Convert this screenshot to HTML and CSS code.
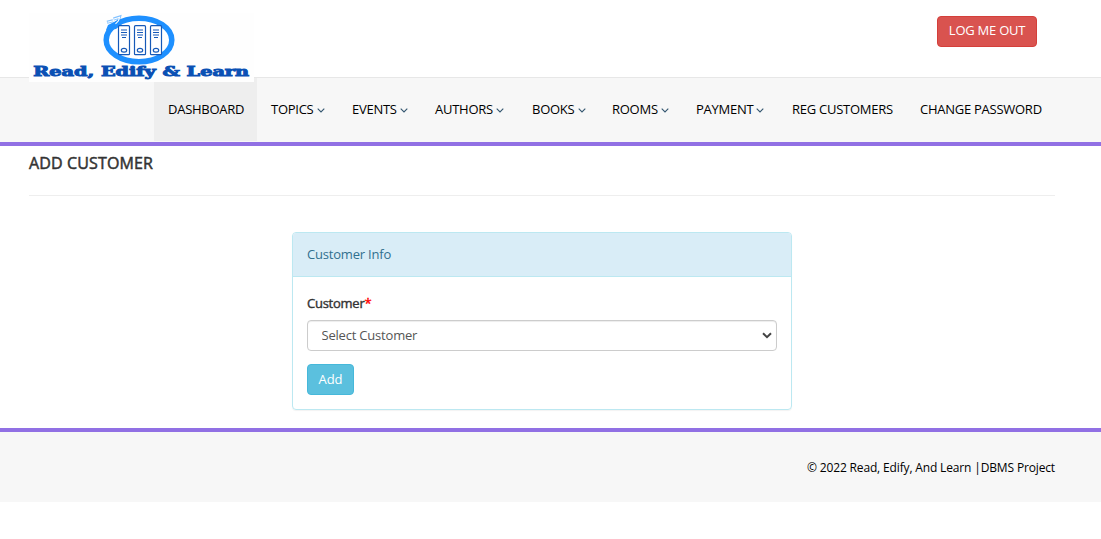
FILE: index.html
```html
<!DOCTYPE html>
<html lang="en">
<head>
<meta charset="utf-8">
<title>Add Customer</title>
<link rel="stylesheet" href="styles.css">
</head>
<body>
<header class="header">
  <svg class="logo" viewBox="0 0 225 69" role="img" aria-label="Read, Edify &amp; Learn">
    <rect width="225" height="69" fill="#fefefe"/>
    <ellipse cx="110" cy="27" rx="32.8" ry="21.7" fill="#fff" stroke="#1e90ff" stroke-width="5.500"/>
    <path d="M77 17l2-5 10-5 4 4-6 5z" fill="#1e90ff"/>
    <path d="M78 9.300l6-1.500M84.500 6l6-2-1 3.500-3 3" fill="none" stroke="#1e90ff" stroke-width="3" opacity=".55"/>
    <path d="M78.500 9.300l6-1.500M84.500 6.300l6-2-1 3.500-3 3" fill="none" stroke="#fff" stroke-width="1.100"/>
    <g fill="#fff" stroke="#1659b8" stroke-width="1.200">
      <rect x="89.500" y="12.700" width="11" height="29" rx="1"/>
      <rect x="105.500" y="12.700" width="11" height="29" rx="1"/>
      <rect x="121.500" y="12.700" width="11" height="29" rx="1"/>
      <ellipse cx="95" cy="37.200" rx="2.700" ry="1.900"/>
      <ellipse cx="111" cy="37.200" rx="2.700" ry="1.900"/>
      <ellipse cx="127" cy="37.200" rx="2.700" ry="1.900"/>
    </g>
    <path d="M92 17h6M92 19.500h6M92 22h6M93 24.500h4M108 17h6M108 19.500h6M108 22h6M109 24.500h4M124 17h6M124 19.500h6M124 22h6M125 24.500h4" stroke="#1659b8"/>
    <text class="logo-text" x="4.300" y="63.300" textLength="215.700" lengthAdjust="spacingAndGlyphs">Read, Edify &amp; Learn</text>
  </svg>
  <a class="btn btn-danger">LOG ME OUT</a>
</header>
<nav class="nav">
  <a class="nav-item active">DASHBOARD</a>
  <a class="nav-item topics">TOPICS <svg class="caret" viewBox="0 0 8 5"><path d="M.7.7L4 4 7.300.7"/></svg></a>
  <a class="nav-item events">EVENTS <svg class="caret" viewBox="0 0 8 5"><path d="M.7.7L4 4 7.300.7"/></svg></a>
  <a class="nav-item authors">AUTHORS <svg class="caret" viewBox="0 0 8 5"><path d="M.7.7L4 4 7.300.7"/></svg></a>
  <a class="nav-item books">BOOKS <svg class="caret" viewBox="0 0 8 5"><path d="M.7.7L4 4 7.300.7"/></svg></a>
  <a class="nav-item rooms">ROOMS <svg class="caret" viewBox="0 0 8 5"><path d="M.7.7L4 4 7.300.7"/></svg></a>
  <a class="nav-item payment">PAYMENT <svg class="caret" viewBox="0 0 8 5"><path d="M.7.7L4 4 7.300.7"/></svg></a>
  <a class="nav-item reg">REG CUSTOMERS</a>
  <a class="nav-item change">CHANGE PASSWORD</a>
</nav>
<main class="content">
  <h4 class="title">ADD CUSTOMER</h4>
  <section class="panel">
    <div class="panel-heading">Customer Info</div>
    <form class="panel-body">
      <label class="label" for="customer">Customer<span class="required">*</span></label>
      <div class="select-wrap">
        <select class="select" id="customer"><option>Select Customer</option></select>
        <svg class="select-arrow" viewBox="0 0 10 7"><path d="M1 1.200l4 4 4-4"/></svg>
      </div>
      <button class="btn btn-info" type="button">Add</button>
    </form>
  </section>
</main>
<footer class="footer">© 2022 Read, Edify, And Learn |DBMS Project</footer>
</body>
</html>
```
FILE: styles.css
```css
* { box-sizing: border-box; }
body {
  margin: 0;
  background: #fff;
  color: #333;
  font: 13px/20px "Open Sans", sans-serif;
}
.header {
  height: 77px;
  padding: 13px 64px 0 29px;
  display: flex;
  align-items: flex-start;
  justify-content: space-between;
}
.logo {
  position: relative;
  z-index: 1;
  width: 225px;
  height: 69px;
  flex: none;
}
.logo-text {
  font: 900 12.5px "DejaVu Serif", serif;
  fill: #0a50b4;
  stroke: #0a50b4;
  stroke-width: .9px;
}
.btn {
  display: block;
  height: 31px;
  padding: 0;
  border: 1px solid;
  border-radius: 4px;
  color: #fff;
  font: 13px/27px "Open Sans", sans-serif;
  text-align: center;
}
.btn-danger {
  width: 100px;
  margin-top: 3px;
  background: #d9534f;
  border-color: #d43f3a;
  letter-spacing: -.25px;
}
.btn-info {
  width: 47px;
  margin-top: 13px;
  background: #5bc0de;
  border-color: #46b8da;
}
.nav {
  height: 69px;
  display: flex;
  padding-left: 154px;
  background: #f7f7f7;
  border-top: 1px solid #e7e7e7;
  border-bottom: 4px solid #9170e4;
}
.nav-item {
  height: 63px;
  padding-left: 14px;
  color: #000;
  line-height: 63px;
  letter-spacing: -.26px;
  white-space: nowrap;
  flex: none;
}
.active { width: 103px; background: #eee; }
.topics { width: 81px; }
.events { width: 83px; }
.authors { width: 97px; }
.books { width: 80px; }
.rooms { width: 84px; }
.payment { width: 96px; }
.reg { width: 128px; }
.change { width: 150px; }
.caret {
  width: 8px;
  height: 5px;
  vertical-align: 1px;
  fill: none;
  stroke: #33566f;
  stroke-width: 1.1;
}
.content {
  height: 282px;
  padding: 0 46px 0 29px;
}
.title {
  height: 50px;
  margin: 0 0 36px;
  padding-top: 7px;
  border-bottom: 1px solid #eee;
  font-size: 16px;
  font-weight: 400;
  line-height: 20px;
  letter-spacing: .14px;
  -webkit-text-stroke: .5px currentColor;
}
.panel {
  width: 500px;
  height: 178px;
  margin-left: 263px;
  border: 1px solid #bce8f1;
  border-radius: 4px;
  box-shadow: 0 1px 1px rgba(0, 0, 0, .05);
}
.panel-heading {
  height: 44px;
  padding: 11px 14px;
  background: #d9edf7;
  border-bottom: 1px solid #bce8f1;
  border-radius: 3px 3px 0 0;
  color: #31708f;
  letter-spacing: -.2px;
}
.panel-body { padding: 16px 14px; }
.label {
  display: block;
  height: 27px;
  letter-spacing: -.25px;
  -webkit-text-stroke: .4px currentColor;
}
.required { color: red; }
.select-wrap { position: relative; }
.select {
  display: block;
  width: 100%;
  height: 31px;
  padding: 0 14px 2px 13.5px;
  appearance: none;
  background: #fff;
  border: 1px solid #ccc;
  border-radius: 4px;
  box-shadow: inset 0 1px 1px rgba(0, 0, 0, .075);
  color: #555;
  font: 13px/20px "Open Sans", sans-serif;
  letter-spacing: -.2px;
}
.select-arrow {
  position: absolute;
  right: 5px;
  top: 12px;
  width: 10px;
  height: 7px;
  fill: none;
  stroke: #444;
  stroke-width: 2;
}
.footer {
  height: 74px;
  padding: 26px 46px 0 0;
  background: #f7f7f7;
  border-top: 4px solid #9170e4;
  color: #000;
  font-size: 12px;
  letter-spacing: -.15px;
  text-align: right;
}
```
